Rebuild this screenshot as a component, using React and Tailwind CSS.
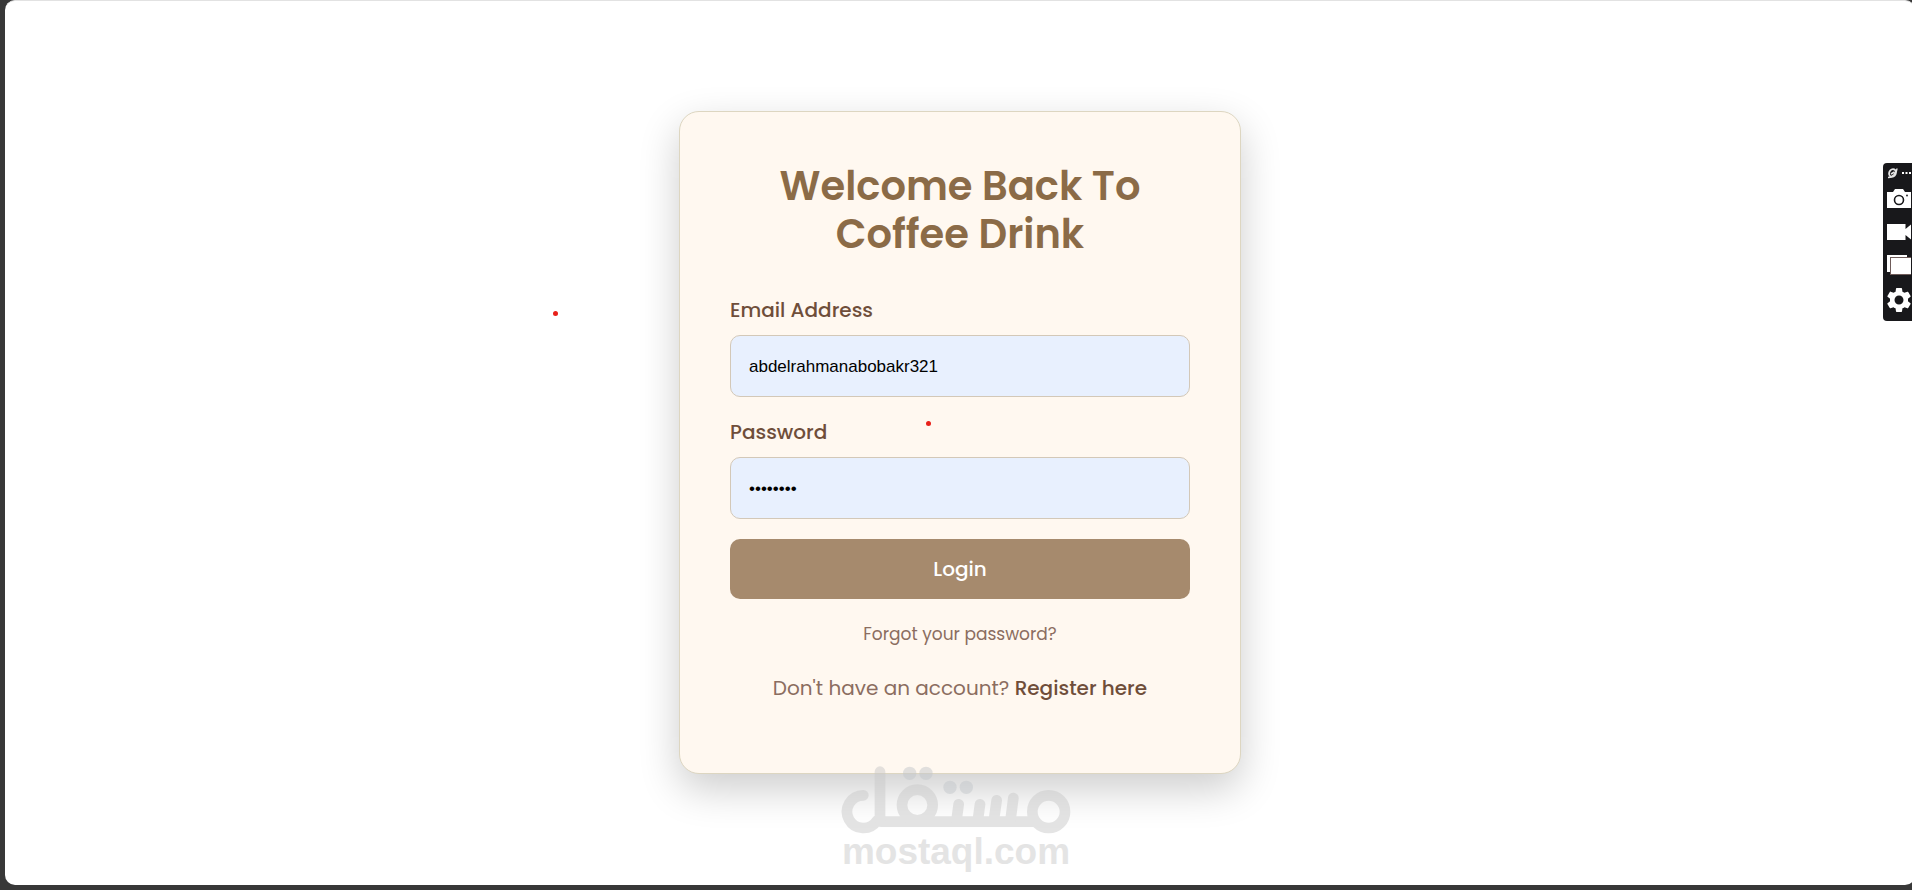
import React, { useState } from 'react';

const FONT = "font-[Poppins,Inter,'Open_Sans',sans-serif]";
const INPUT_CLASS =
  "block w-full h-[62px] px-[18px] pt-0.5 rounded-[10px] border border-[#d3c8b8] bg-[#e8f0fe] text-[17px] text-black font-['Liberation_Sans',Arial,sans-serif] focus:outline-none focus:ring-2 focus:ring-[#a68a6d]";

function CameraIcon() {
  return (
    <svg width="24" height="19" viewBox="0 0 24 19" aria-hidden="true">
      <path d="M0 3h6l2-3h8l2 3h6v16H0z" fill="#fff" />
      <circle cx="12" cy="11" r="4.500" fill="#fff" stroke="#18181b" strokeWidth="1.600" />
      <circle cx="20" cy="6.500" r="0.900" fill="#18181b" />
    </svg>
  );
}

function VideoIcon() {
  return (
    <svg width="24" height="16" viewBox="0 0 24 16" aria-hidden="true">
      <path d="M0 0h18.500v5L24 .5v15L18.500 11v5H0z" fill="#fff" />
    </svg>
  );
}

function WindowsIcon() {
  return (
    <svg width="24" height="22" viewBox="0 0 24 22" aria-hidden="true">
      <rect x="0" y="0" width="20" height="17" fill="#fff" />
      <rect x="3.500" y="2.500" width="24" height="17" fill="#fff" stroke="#6f5c5a" strokeWidth="1" />
    </svg>
  );
}

function GearIcon() {
  return (
    <svg width="24" height="24" viewBox="2.4 2.4 19.2 19.2" aria-hidden="true">
      <path
        fill="#fff"
        d="M19.14 12.94c.04-.3.06-.61.06-.94 0-.32-.02-.64-.07-.94l2.030-1.580c.18-.14.23-.41.12-.61l-1.920-3.320c-.12-.22-.37-.29-.59-.22l-2.390.96c-.5-.38-1.030-.7-1.620-.94l-.36-2.540c-.04-.24-.24-.41-.48-.41h-3.840c-.24 0-.43.17-.47.41l-.36 2.540c-.59.24-1.130.57-1.620.94l-2.390-.96c-.22-.08-.47 0-.59.22L2.740 8.870c-.12.21-.08.47.12.61l2.030 1.580c-.05.3-.09.63-.09.94s.02.64.07.94l-2.030 1.580c-.18.14-.23.41-.12.61l1.920 3.320c.12.22.37.29.59.22l2.390-.96c.5.38 1.030.7 1.620.94l.36 2.540c.05.24.24.41.48.41h3.840c.24 0 .44-.17.47-.41l.36-2.540c.59-.24 1.130-.56 1.620-.94l2.390.96c.22.08.47 0 .59-.22l1.920-3.320c.12-.22.07-.47-.12-.61l-2.010-1.580zM12 15.600c-1.980 0-3.600-1.620-3.600-3.600s1.620-3.600 3.600-3.600 3.600 1.620 3.600 3.600-1.620 3.600-3.600 3.600z"
      />
    </svg>
  );
}

const TOOLS = [
  { name: 'Screenshot', Icon: CameraIcon },
  { name: 'Record video', Icon: VideoIcon },
  { name: 'Gallery', Icon: WindowsIcon },
  { name: 'Settings', Icon: GearIcon }
];

function CaptureBar() {
  return (
    <div className="absolute right-0 top-[163px] w-[29px] pl-1 pb-1 overflow-hidden rounded-l-[4px] bg-[#18181b]">
      <div className="flex items-center h-[18px] pt-0.5">
        <svg width="24" height="12" viewBox="0 0 24 12" aria-hidden="true">
          <ellipse cx="5.500" cy="6" rx="3.300" ry="4" transform="rotate(25 5.500 6)" fill="none" stroke="#e5e5e5" strokeWidth="1.800" />
          <path d="M1 10.500C5 10.500 10 6 10 1.500M4 7l3.500-2" fill="none" stroke="#e5e5e5" strokeWidth="1.500" />
          <path d="M15 5h2v2h-2zM18.500 5h2v2h-2zM22 5h2v2h-2z" fill="#fff" />
        </svg>
      </div>
      {TOOLS.map(({ name, Icon }) => (
        <button key={name} type="button" aria-label={name} className="flex items-center w-full h-[34px]">
          <span className="shrink-0">
            <Icon />
          </span>
        </button>
      ))}
    </div>
  );
}

function Watermark() {
  return (
    <div className="absolute inset-x-0 bottom-5 flex flex-col items-center opacity-50 pointer-events-none">
      <svg width="230" height="68" viewBox="62 47 690 204" aria-hidden="true">
        <g fill="none" stroke="#cacaca" strokeWidth="32" strokeLinecap="round">
          <path d="M129 135A49 49 0 1 0 170 211" />
          <path d="M182 214H641" />
          <path d="M179 64V210" />
          <circle cx="291" cy="164" r="46" />
          <path d="M415 162L408 214M479 162L472 214M529 150L520 214M579 143L570 214" />
          <circle cx="685" cy="184" r="49" />
        </g>
        <g fill="#c4c8cc">
          <circle cx="268" cy="69" r="20" />
          <circle cx="317" cy="69" r="20" />
          <circle cx="389" cy="111" r="20" />
          <circle cx="438" cy="111" r="20" />
        </g>
      </svg>
      <span className="text-[37px] leading-9 font-bold text-[#cacaca] font-['Liberation_Sans',Arial,sans-serif]">
        mostaql.com
      </span>
    </div>
  );
}

export default function App() {
  const [form, setForm] = useState({ email: 'abdelrahmanabobakr321', password: 'coffee12' });

  const handleChange = (e) => {
    const { name, value } = e.target;
    setForm(prev => ({ ...prev, [name]: value }));
  };

  const handleSubmit = (e) => {
    e.preventDefault();
  };

  return (
    <div className={`relative flex min-h-screen overflow-hidden bg-[#383838] pl-[5px] pb-[5px] ${FONT}`}>
      <main className="flex grow items-center justify-center -mr-[3px] pb-px rounded-[10px] border-t border-[#e2e2e2] bg-white">
        <div className="w-full max-w-[562px] px-[50px] pt-[50px] pb-[70px] rounded-[20px] border border-[#ddd6c1] bg-[#fff8f0] shadow-[0_15px_40px_rgba(0,0,0,0.2)]">
          <h1 className="mb-[37px] text-center text-[40px] leading-[48px] font-semibold text-[#8b6b47]">
            Welcome Back To Coffee Drink
          </h1>

          <form onSubmit={handleSubmit} className="flex flex-col gap-5">
            <div>
              <label htmlFor="email" className="block mb-2.5 text-[20px] leading-[30px] font-medium text-[#6f4e3a]">
                Email Address
              </label>
              <input id="email" name="email" type="text" value={form.email} onChange={handleChange} className={INPUT_CLASS} />
            </div>
            <div>
              <label htmlFor="password" className="block mb-2.5 text-[20px] leading-[30px] font-medium text-[#6f4e3a]">
                Password
              </label>
              <input id="password" name="password" type="password" value={form.password} onChange={handleChange} className={INPUT_CLASS} />
            </div>
            <button type="submit" className="h-[60px] rounded-[10px] bg-[#a68a6d] text-[20px] font-medium text-white hover:bg-[#8b6b47]">
              Login
            </button>
          </form>

          <p className="mt-5 text-center text-[17px] leading-[30px] text-[#8b6d60]">
            <a href="#forgot">Forgot your password?</a>
          </p>
          <p className="mt-6 text-center text-[20px] leading-[30px] text-[#8b6d60]">
            Don't have an account?{' '}
            <a href="#register" className="font-medium text-[#6f4e3a]">Register here</a>
          </p>
        </div>
      </main>

      {/* Pen marks */}
      <span className="absolute left-[553px] top-[311px] size-[5px] rounded-full bg-[#e8201a]" />
      <span className="absolute left-[926px] top-[421px] size-[5px] rounded-full bg-[#e8201a]" />

      <Watermark />
      <CaptureBar />
    </div>
  );
}
